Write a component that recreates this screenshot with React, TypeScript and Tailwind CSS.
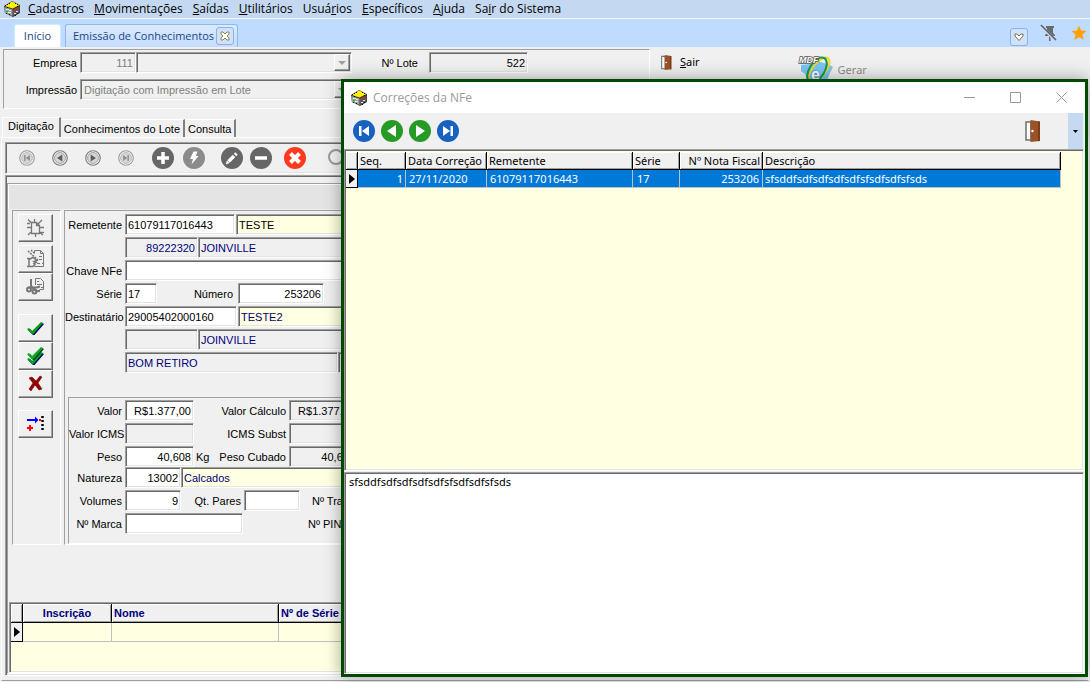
import React from 'react';

const sunken =
  'border border-t-[#a0a0a0] border-l-[#a0a0a0] border-r-white border-b-white shadow-[inset_1px_1px_0_#696969,inset_-1px_-1px_0_#e3e3e3]';
const raised =
  'border border-t-white border-l-white border-r-[#696969] border-b-[#696969] shadow-[inset_-1px_-1px_0_#a0a0a0]';
const group = 'border border-t-[#a0a0a0] border-l-[#a0a0a0] border-r-white border-b-white';
const segoe = 'font-["Open_Sans",sans-serif]';
const tahoma = 'font-["Noto_Sans",sans-serif]';

type FieldProps = {
  id: string;
  label?: string;
  name?: string;
  value?: string;
  className: string;
  labelClass?: string;
};

const Field: React.FC<FieldProps> = ({ id, label, name, value = '', className, labelClass = 'w-[57px]' }) => (
  <>
    {label && (
      <label htmlFor={id} className={`shrink-0 text-right whitespace-nowrap mr-[3px] ${labelClass}`}>
        {label}
      </label>
    )}
    <input
      id={id}
      aria-label={label ? undefined : name}
      defaultValue={value}
      className={`h-[21px] px-[2px] rounded-none outline-none ${sunken} ${className}`}
    />
  </>
);

const AppIcon: React.FC = () => (
  <svg viewBox="0 0 16 16" className="w-4 h-4 shrink-0">
    <path d="M0 5 8 0l8 4v8l-7 4-8-4z" fill="#3a3a3a" />
    <path d="M1 5 8 .5 15.500 4 8.500 7.500z" fill="#fff200" />
    <path d="M.5 6 8.500 8.500V15l-8-3.500z" fill="#a0a0a0" />
    <path d="M9 8.500 15.500 5.500v6L9 15z" fill="#585858" />
    <path d="M2 8.500h3M4 11.500h3M10 12.500h2M12 10.500h2M5 9.500h2" stroke="#e8e8e8" />
    <path d="M2 10.500h2" stroke="#00d030" strokeWidth="1.500" />
    <path d="M10 9.500 14 7" stroke="#e02020" strokeWidth="1.200" />
    <path d="M1 4.500h1M3 3.500h1M5 2.500h1M11 2.500h1M13 3.500h1M3 6.500h1M13 5.500h1M2 12.500h1M5 13.500h1M11 14.500h1M13 12.500h1" stroke="#111" />
  </svg>
);

const DoorIcon: React.FC<{ className: string }> = ({ className }) => (
  <svg viewBox="0 0 16 22" className={className} preserveAspectRatio="none">
    <path d="M1 2h5v18H1z" fill="#fff" stroke="#6e6e6e" strokeWidth="1.500" />
    <path d="M5.500 0 15 1.500v19.500L5.500 22z" fill="#9a5228" />
    <path d="M14 1.500v19.500" stroke="#7c3c18" strokeWidth="2" />
    <circle cx="7.500" cy="11" r="1.200" fill="#fff" />
  </svg>
);

const NavGlyph: React.FC<{ kind: string; fill: string }> = ({ kind, fill }) => (
  <g fill={fill}>
    {kind === 'first' && <path d="M6 6h2.500v10H6zM16 6v10l-7-5z" />}
    {kind === 'prev' && <path d="M15 5v12L6 11z" />}
    {kind === 'next' && <path d="M7 5v12l9-6z" />}
    {kind === 'last' && <path d="M13.500 6H16v10h-2.500zM6 6v10l7-5z" />}
  </g>
);

const navs = [
  { kind: 'first', label: 'Primeiro', color: '#1762c0' },
  { kind: 'prev', label: 'Anterior', color: '#259a24' },
  { kind: 'next', label: 'Próximo', color: '#259a24' },
  { kind: 'last', label: 'Último', color: '#1762c0' },
];

const menu = [
  ['', 'C', 'adastros'],
  ['', 'M', 'ovimentações'],
  ['', 'S', 'aídas'],
  ['', 'U', 'tilitários'],
  ['Usuá', 'r', 'ios'],
  ['', 'E', 'specíficos'],
  ['', 'A', 'juda'],
  ['Sa', 'i', 'r do Sistema'],
];

const actions = [
  {
    label: 'Adicionar',
    color: '#666666',
    space: 'ml-[18px]',
    glyph: <path d="M11 5v12M5 11h12" stroke="#fff" strokeWidth="3.500" />,
  },
  {
    label: 'Executar',
    color: '#8b8b8b',
    space: 'ml-[9px]',
    glyph: <path d="M10.500 4.500h4L12.800 9h2.700L8.500 17.500 10 12H7z" fill="#fff" />,
  },
  {
    label: 'Editar',
    color: '#666666',
    space: 'ml-4',
    glyph: (
      <g stroke="#fff">
        <path d="M7.500 14.500l5.500-5.500M14 8l1.500-1.500" strokeWidth="3.500" />
        <path d="M5 17l1-3 2 2z" fill="#fff" strokeWidth="0.500" />
      </g>
    ),
  },
  {
    label: 'Remover',
    color: '#666666',
    space: 'ml-[7px]',
    glyph: <path d="M5 11h12" stroke="#fff" strokeWidth="3.500" />,
  },
  {
    label: 'Cancelar',
    color: '#ff3a1f',
    space: 'ml-3',
    glyph: <path d="M6.500 6.500l9 9M15.500 6.500l-9 9" stroke="#fff" strokeWidth="4" />,
  },
];

const check = 'M1 7l2-1 3 3L15 0l2 1-9.500 11H6z';

const sideTools = [
  {
    label: 'Novo',
    space: '',
    glyph: (
      <g stroke="#777" fill="none">
        <path d="M5.500 4.500h5l3 3v8h-8zM10.500 4.500v3h3" strokeWidth="1.300" />
        <path d="M2 1.500l3 3M16 2l-4 4M1 9.500h4M14 9.500h4M2 17l3-3M17 17l-4-3M8.500 1v3M9.500 16v3M1 5.500h3M14 14.500h4" strokeWidth="1.300" />
      </g>
    ),
  },
  {
    label: 'Alterar',
    space: 'mt-[3px]',
    glyph: (
      <g stroke="#777" fill="none">
        <path d="M8.500 4.500v-3h6l3 3v13h-9" />
        <path d="M14.500 1.500v3h3M13 7.500h3M13 10.500h3M11 14.500h3M16 14.500h1" />
        <path d="M2 2l10 9M5 1l3 3" strokeWidth="1.500" strokeDasharray="2 1" />
        <path d="M1 9.500h2v8H1M3 10.500l4-2 4 3-3 1 2 1-2 1 1 1-2 2H3" strokeWidth="1.500" />
      </g>
    ),
  },
  {
    label: 'Recortar',
    space: '',
    glyph: (
      <g stroke="#777" fill="none">
        <path d="M9.500 8v-6.500h5l3 3v8h-4" />
        <path d="M11 4.500h2M11 7.500h5M15 10.500h2" />
        <path d="M5 2v7l5 5h4M2 10.500h9l3-1" strokeWidth="2" />
        <circle cx="3" cy="12.500" r="2" strokeWidth="2" />
        <circle cx="8.500" cy="14.500" r="2" strokeWidth="2" />
      </g>
    ),
  },
  {
    label: 'Confirmar',
    space: 'mt-[13px]',
    glyph: (
      <g>
        <path d={check} transform="translate(1 5)" fill="#000070" />
        <path d={check} transform="translate(0 4)" fill="#00a015" />
      </g>
    ),
  },
  {
    label: 'Confirmar todos',
    space: '',
    glyph: (
      <g>
        <path d={check} transform="translate(1 7)" fill="#000070" />
        <path d={check} transform="translate(0 6)" fill="#00a015" />
        <path d={check} transform="translate(1 2)" fill="#003a40" />
        <path d={check} transform="translate(0 1)" fill="#00b018" />
      </g>
    ),
  },
  {
    label: 'Excluir',
    space: '',
    glyph: <path d="M3 4l3-1 4 4 4-5 2 1-4 6 4 6-3 1-4-5-4 6-2-2 4-6z" fill="#980000" stroke="#500000" strokeWidth="0.500" />,
  },
  {
    label: 'Incluir item',
    space: 'mt-3',
    glyph: (
      <g>
        <path d="M1 5h8V2.500L12.500 6 9 9.500V7H1z" fill="#0000ff" />
        <path d="M1 14h6M4 11v6" stroke="#ff0000" strokeWidth="2" />
        <path d="M13 6h2" stroke="#ff0000" strokeWidth="2" />
        <path d="M16.500 2v16" stroke="#000" strokeWidth="2.500" strokeDasharray="2 2" />
      </g>
    ),
  },
];

const MdfeLogo: React.FC = () => (
  <svg viewBox="0 0 36 28" className="w-9 h-7">
    <path d="M3 10l9-1 5-4 5 2 8 2 5 3-3 6-3 7-6 2H10l-3-8-4-3z" fill="#79c4f3" />
    <ellipse cx="21" cy="15" rx="6.500" ry="15" transform="rotate(38 21 15)" fill="none" stroke="#f1d628" strokeWidth="2" />
    <ellipse cx="19" cy="15" rx="7.500" ry="14" transform="rotate(32 19 15)" fill="none" stroke="#14984a" strokeWidth="2" />
    <text x="13" y="25" fontFamily="Liberation Sans" fontSize="16" fontWeight="bold" fill="#fff" stroke="#368fc7" strokeWidth="1" paintOrder="stroke">
      e
    </text>
    <text x="1" y="8" fontFamily="Liberation Sans" fontSize="9" fontWeight="bold" fontStyle="italic" fill="#fff" stroke="#555" strokeWidth="1.500" paintOrder="stroke">
      MDF
    </text>
  </svg>
);

const th =
  'bg-[#f0f0f0] border-r border-b border-black shadow-[inset_1px_1px_0_#ffffff,inset_-1px_-1px_0_#a0a0a0] whitespace-nowrap overflow-hidden px-[2px]';

const RowMarker: React.FC = () => (
  <svg viewBox="0 0 6 10" className="w-[6px] h-[10px] ml-[3px]">
    <path d="M0 0l6 5-6 5z" fill="#000" />
  </svg>
);

const TopBars: React.FC = () => (
  <>
    <nav className={`flex items-center h-[18px] pl-1 bg-[#c4d9f1] text-xs leading-4 text-black ${segoe}`}>
      <AppIcon />
      <div className="flex gap-[10px] ml-2">
        {menu.map(([before, key, after]) => (
          <a key={key + after} href="#" className="whitespace-nowrap">
            {before}
            <span className="underline">{key}</span>
            {after}
          </a>
        ))}
      </div>
    </nav>
    <div className={`flex items-end h-[29px] border-t border-[#f4f8fd] bg-[#bfdbff] text-[11px] text-[#1c4587] ${segoe}`}>
      <button className="h-[23px] w-[47px] ml-[14px] rounded-t-[3px] border border-b-0 border-[#c9f0fa] bg-white">Início</button>
      <div className="flex items-center h-[23px] ml-1 pl-[7px] pr-[3px] rounded-t-[3px] border border-b-0 border-[#8db8ea] bg-gradient-to-b from-[#dcebfd] to-[#c3dcff]">
        <button className="whitespace-nowrap">Emissão de Conhecimentos</button>
        <button aria-label="Fechar" className="flex items-center justify-center size-[18px] ml-[2px] rounded-[3px] border border-[#8fb1de] bg-[#cfe2fb]">
          <svg viewBox="0 0 10 10" className="size-[10px]">
            <path d="M1 1h2l2 2 2-2h2v2L7 5l2 2v2H7L5 7 3 9H1V7l2-2-2-2z" fill="#fff" stroke="#8a8250" />
          </svg>
        </button>
      </div>
      <div className="flex items-end ml-auto pb-[1px]">
        <button aria-label="Lista de abas" className="flex items-center justify-center size-[18px] rounded-[3px] border border-[#8fb1de] bg-[#cfe2fb]">
          <svg viewBox="0 0 10 10" className="size-[10px]">
            <path d="M1 2h2l2 2 2-2h2v2L5 8.500 1 4z" fill="#fff" stroke="#77733f" />
          </svg>
        </button>
        <button aria-label="Desafixar" className="ml-3 mb-1">
          <svg viewBox="0 0 18 18" className="size-[18px]">
            <path d="M6 2h8v2h-1v5l2 2v1h-4.500v5h-1.500v-5H5v-1l2-2V4H6z" fill="#6b6b6b" />
            <path d="M1 2l15 15" stroke="#c5daf7" strokeWidth="3" />
            <path d="M1 1l15 15" stroke="#5c5c5c" strokeWidth="1.500" />
          </svg>
        </button>
        <button aria-label="Favorito" className="ml-[13px] mb-[5px] mr-[3px]">
          <svg viewBox="0 0 16 16" className="size-4">
            <path d="M8 .8l2.200 4.700 5.200.6-3.900 3.500 1.100 5.200L8 12.200l-4.600 2.600 1.100-5.200L.6 6.100l5.200-.6z" fill="#ffa200" />
          </svg>
        </button>
      </div>
    </div>
  </>
);

const LoteHeader: React.FC = () => (
  <div className="flex pt-[2px] pl-[3px] h-[62px]">
    <div className={`w-[647px] pt-[2px] ${group}`}>
      <div className="flex items-center h-[21px]">
        <Field id="empresa" label="Empresa" value="111" labelClass="w-[73px]" className="w-14 text-right text-[#808080]" />
        <div className={`relative w-[216px] h-[21px] ${sunken}`}>
          <select aria-label="Nome da empresa" className="w-full h-full appearance-none rounded-none outline-none px-1 text-[#808080]" />
          <span className={`absolute right-[1px] top-[1px] flex items-center justify-center w-4 h-[17px] bg-[#f0f0f0] pointer-events-none ${raised}`}>
            <svg viewBox="0 0 8 4" className="w-2 h-1"><path d="M0 0h8L4 4z" fill="#a0a0a0" /></svg>
          </span>
        </div>
        <Field id="lote" label="Nº Lote" value="522" labelClass="w-[66px]" className="w-[99px] ml-2 text-right" />
      </div>
      <div className="flex items-center h-[21px] mt-[6px]">
        <label htmlFor="impressao" className="w-[73px] mr-[3px] text-right">Impressão</label>
        <div className={`relative w-[272px] h-[21px] ${sunken}`}>
          <select id="impressao" className="w-full h-full appearance-none rounded-none outline-none px-[3px] text-[#808080]">
            <option>Digitação com Impressão em Lote</option>
          </select>
          <span className={`absolute right-[1px] top-[1px] flex items-center justify-center w-4 h-[17px] bg-[#f0f0f0] pointer-events-none ${raised}`}>
            <svg viewBox="0 0 8 4" className="w-2 h-1"><path d="M0 0h8L4 4z" fill="#a0a0a0" /></svg>
          </span>
        </div>
      </div>
    </div>
    <button className={`flex items-center self-start h-[26px] ml-[11px] text-black ${tahoma}`}>
      <DoorIcon className="w-[11px] h-[15px]" />
      <span className="ml-2"><span className="underline">S</span>air</span>
    </button>
    <button className={`flex items-start self-start ml-[98px] mt-[6px] text-[#8c8c8c] ${tahoma}`}>
      <MdfeLogo />
      <span className="ml-1 mt-[7px] leading-4">Gerar</span>
    </button>
  </div>
);

const RecordToolbar: React.FC = () => (
  <div className={`flex items-center h-8 shrink-0 pl-[13px] overflow-hidden ${sunken}`}>
    <div className="flex gap-[17px]">
      {navs.map((nav) => {
        const middle = nav.kind === 'prev' || nav.kind === 'next';
        return (
          <button key={nav.kind} aria-label={nav.label}>
            <svg viewBox="0 0 22 22" className="size-4">
              <circle cx="11" cy="11" r="10" fill="#fafafa" stroke={middle ? '#777' : '#999'} strokeWidth="1.500" />
              <circle cx="11" cy="11" r="7.500" fill="#d6d6d6" stroke={middle ? '#888' : '#aaa'} />
              <g transform="translate(2.200 2.200) scale(.8)">
                <NavGlyph kind={nav.kind} fill={middle ? '#5c5c5c' : '#8f8f8f'} />
              </g>
            </svg>
          </button>
        );
      })}
    </div>
    {actions.map((action) => (
      <button key={action.label} aria-label={action.label} className={action.space}>
        <svg viewBox="0 0 22 22" className="size-[22px]">
          <circle cx="11" cy="11" r="11" fill={action.color} />
          {action.glyph}
        </svg>
      </button>
    ))}
    <button aria-label="Pesquisar" className="ml-[21px]">
      <svg viewBox="0 0 22 22" className="size-[22px]">
        <circle cx="9" cy="10" r="7" fill="#f4f4f4" stroke="#9a9a9a" strokeWidth="2" />
        <path d="M14 15l6 6" stroke="#9a9a9a" strokeWidth="3" />
      </svg>
    </button>
  </div>
);

const NotaForm: React.FC = () => (
  <div className="flex px-1 pt-[1px]">
    <div className={`flex flex-col w-[49px] pl-[5px] pt-[3px] shrink-0 ${group}`}>
      {sideTools.map((tool) => (
        <button key={tool.label} aria-label={tool.label} className={`flex items-center justify-center w-[35px] h-7 bg-[#f0f0f0] ${raised} ${tool.space}`}>
          <svg viewBox="0 0 19 20" className="w-[19px] h-5">{tool.glyph}</svg>
        </button>
      ))}
    </div>
    <div className={`flex-1 min-w-0 ml-[3px] pt-[3px] overflow-hidden ${group}`}>
      <div className="flex flex-col gap-[2px]">
        <div className="flex items-center">
          <Field id="remetente" label="Remetente" value="61079117016443" className="w-[110px] bg-white" />
          <Field id="remNome" name="Nome do remetente" value="TESTE" className="w-[400px] ml-[1px] bg-[#ffffe1]" />
        </div>
        <div className="flex items-center pl-[60px]">
          <Field id="remCep" name="CEP do remetente" value="89222320" className="w-[73px] text-right text-[#00007b]" />
          <Field id="remCidade" name="Cidade do remetente" value="JOINVILLE" className="w-[300px] text-[#00007b]" />
        </div>
        <div className="flex items-center">
          <Field id="chave" label="Chave NFe" className="w-[400px] bg-white" />
        </div>
        <div className="flex items-center">
          <Field id="serie" label="Série" value="17" className="w-8 bg-white" />
          <Field id="numero" label="Número" value="253206" labelClass="w-[76px]" className="w-[86px] ml-[2px] bg-white text-right" />
        </div>
        <div className="flex items-center">
          <Field id="dest" label="Destinatário" value="29005402000160" className="w-[112px] bg-white" />
          <Field id="destNome" name="Nome do destinatário" value="TESTE2" className="w-[400px] ml-[1px] bg-[#ffffe1] text-[#00007b]" />
        </div>
        <div className="flex items-center pl-[60px]">
          <Field id="destCep" name="CEP do destinatário" className="w-[73px]" />
          <Field id="destCidade" name="Cidade do destinatário" value="JOINVILLE" className="w-[300px] text-[#00007b]" />
        </div>
        <div className="flex items-center pl-[60px]">
          <Field id="bairro" name="Bairro" value="BOM RETIRO" className="w-[213px] text-[#00007b]" />
          <Field id="compl" name="Complemento" className="w-[200px]" />
        </div>
      </div>
      <div className={`flex flex-col gap-[2px] h-[147px] mt-6 ml-[3px] pt-[2px] ${group}`}>
        <div className="flex items-center">
          <Field id="valor" label="Valor" value="R$1.377,00" labelClass="w-[53px]" className="w-[69px] bg-white text-right" />
          <Field id="calculo" label="Valor Cálculo" value="R$1.377,00" labelClass="w-[92px]" className="w-[69px] text-right" />
        </div>
        <div className="flex items-center">
          <Field id="icms" label="Valor ICMS" labelClass="w-[53px]" className="w-[69px]" />
          <Field id="subst" label="ICMS Subst" labelClass="w-[92px]" className="w-[69px]" />
        </div>
        <div>
          <div className="flex items-center">
            <Field id="peso" label="Peso" value="40,608" labelClass="w-[53px]" className="w-[69px] bg-white text-right" />
            <span className="w-4 ml-[2px]">Kg</span>
            <Field id="cubado" label="Peso Cubado" value="40,608" labelClass="w-[74px]" className="w-[69px] text-right" />
          </div>
          <div className="flex items-center">
            <Field id="natureza" label="Natureza" value="13002" labelClass="w-[53px]" className="w-[56px] bg-white text-right" />
            <Field id="natNome" name="Descrição da natureza" value="Calcados" className="w-[300px] bg-[#ffffe1] text-[#00007b]" />
          </div>
        </div>
        <div className="flex items-center">
          <Field id="volumes" label="Volumes" value="9" labelClass="w-[53px]" className="w-[56px] bg-white text-right" />
          <Field id="pares" label="Qt. Pares" labelClass="w-[60px]" className="w-[56px] bg-white" />
          <Field id="transporte" label="Nº Transporte" labelClass="ml-3" className="w-[80px] bg-white" />
        </div>
        <div className="flex items-center">
          <Field id="marca" label="Nº Marca" labelClass="w-[53px]" className="w-[118px] bg-white" />
          <Field id="pin" label="Nº PIN" labelClass="ml-[65px]" className="w-[80px] bg-white" />
        </div>
      </div>
    </div>
  </div>
);

const InscricaoTable: React.FC = () => (
  <div className={`flex-1 mt-[57px] ml-[1px] p-[1px] overflow-hidden bg-[#ffffe1] ${sunken}`}>
    <table className="w-[850px] table-fixed border-separate border-spacing-0">
      <thead>
        <tr className="h-[19px] text-[#00007b] font-bold">
          <th className={`w-3 ${th}`} />
          <th className={`w-[89px] text-center ${th}`}>Inscrição</th>
          <th className={`w-[167px] text-left ${th}`}>Nome</th>
          <th className={`text-left ${th}`}>Nº de Série</th>
        </tr>
      </thead>
      <tbody>
        <tr className="h-[19px]">
          <td className="p-0 bg-[#f0f0f0] border-r border-b border-black"><RowMarker /></td>
          <td className="border-r border-b border-[#c0c0c0]" />
          <td className="border-r border-b border-[#c0c0c0]" />
          <td className="border-r border-b border-[#c0c0c0]" />
        </tr>
      </tbody>
    </table>
  </div>
);

const CorrecoesWindow: React.FC = () => (
  <section
    className={`absolute left-[341px] right-[2px] top-[79px] bottom-[5px] flex flex-col border-[3px] border-[#004a00] bg-[#f0f0f0] shadow-[0_0_16px_rgba(0,0,0,0.35)] text-[11px] leading-[14px] ${tahoma}`}
  >
    <header className={`flex items-center h-[31px] shrink-0 pl-[7px] bg-white text-xs text-[#999999] ${segoe}`}>
      <AppIcon />
      <h1 className="ml-[6px]">Correções da NFe</h1>
      <div className="flex ml-auto gap-[35px] mr-[18px]">
        <button aria-label="Minimizar">
          <svg viewBox="0 0 11 11" className="size-[11px]"><path d="M0 5.500h11" stroke="#999" /></svg>
        </button>
        <button aria-label="Maximizar">
          <svg viewBox="0 0 11 11" className="size-[11px]"><path d="M.5.5h10v10H.5z" fill="none" stroke="#999" /></svg>
        </button>
        <button aria-label="Fechar janela">
          <svg viewBox="0 0 11 11" className="size-[11px]"><path d="M.5.5l10 10M10.500.5l-10 10" stroke="#999" /></svg>
        </button>
      </div>
    </header>
    <div className="flex items-center h-9 shrink-0 pl-[9px]">
      <div className="flex gap-[6px]">
        {navs.map((nav) => (
          <button key={nav.kind} aria-label={nav.label}>
            <svg viewBox="0 0 22 22" className="size-[22px]">
              <circle cx="11" cy="11" r="11" fill={nav.color} />
              <NavGlyph kind={nav.kind} fill="#fff" />
            </svg>
          </button>
        ))}
      </div>
      <button aria-label="Sair" className="ml-auto">
        <DoorIcon className="w-4 h-[22px]" />
      </button>
      <button aria-label="Opções" className="flex items-center justify-center w-[15px] h-9 ml-[27px] mr-[2px] bg-[#c5d9f1]">
        <svg viewBox="0 0 5 3" className="w-[5px] h-[3px]"><path d="M0 0h5L2.500 3z" fill="#000" /></svg>
      </button>
    </div>
    <div className={`flex-[324] min-h-0 overflow-hidden pt-[2px] px-[1px] mr-[1px] bg-[#ffffe1] ${sunken}`}>
      <table className="w-[715px] table-fixed border-separate border-spacing-0">
        <thead>
          <tr className="h-[18px] text-black">
            <th className={`w-3 ${th}`} />
            <th className={`w-12 text-left font-normal ${th}`}>Seq.</th>
            <th className={`w-[81px] text-left font-normal ${th}`}>Data Correção</th>
            <th className={`w-[146px] text-left font-normal ${th}`}>Remetente</th>
            <th className={`w-[47px] text-left font-normal ${th}`}>Série</th>
            <th className={`w-[83px] text-right font-normal ${th}`}>Nº Nota Fiscal</th>
            <th className={`text-left font-normal ${th}`}>Descrição</th>
          </tr>
        </thead>
        <tbody>
          <tr className="h-[18px] bg-[#0078d7] text-white">
            <td className="p-0 bg-[#f0f0f0] border-r border-b border-black"><RowMarker /></td>
            <td className="py-0 px-[2px] text-right border-r border-b border-[#c0c0c0]">1</td>
            <td className="py-0 px-[3px] border-r border-b border-[#c0c0c0]">27/11/2020</td>
            <td className="py-0 px-[3px] border-r border-b border-[#c0c0c0]">61079117016443</td>
            <td className="py-0 px-1 border-r border-b border-[#c0c0c0]">17</td>
            <td className="py-0 px-[3px] text-right border-r border-b border-[#c0c0c0]">253206</td>
            <td className="py-0 px-[2px] border-r border-b border-[#c0c0c0]">sfsddfsdfsdfsdfsdfsfsdfsdfsfsds</td>
          </tr>
        </tbody>
      </table>
    </div>
    <textarea
      aria-label="Descrição da correção"
      defaultValue="sfsddfsdfsdfsdfsdfsfsdfsdfsfsds"
      className={`flex-[199] min-h-0 mt-[1px] mr-[1px] px-1 py-[2px] resize-none outline-none rounded-none bg-white text-black ${sunken}`}
    />
  </section>
);

const App: React.FC = () => (
  <div className='relative flex flex-col h-screen overflow-hidden bg-[#f0f0f0] text-[11px] leading-[14px] text-black font-["Liberation_Sans",Arial,sans-serif]'>
    <TopBars />
    <LoteHeader />
    <div className="flex items-end h-7 pl-[2px]">
      <button className="h-5 px-[5px] pb-1 border-t border-l border-white border-r-2 border-r-[#808080]">Digitação</button>
      <button className="h-[18px] px-[3px] border-t border-white border-r-2 border-r-[#808080]">Conhecimentos do Lote</button>
      <button className="h-[18px] px-[3px] border-t border-white border-r-2 border-r-[#808080]">Consulta</button>
    </div>
    <main className="flex-1 flex flex-col min-h-0 mx-[1px] mb-[1px] pt-1 pl-[3px] pb-1 border border-white border-b-[#a0a0a0]">
      <RecordToolbar />
      <div className={`flex-1 flex flex-col min-h-0 mt-[1px] pt-[7px] pl-[1px] pr-[1px] pb-[1px] ${sunken}`}>
        <div className="flex-1 flex flex-col min-h-0 border border-[#a0a0a0] border-b-white">
          <div className="h-[25px] shrink-0 border-t border-l border-white bg-[#e4e4e4]" />
          <NotaForm />
          <InscricaoTable />
        </div>
      </div>
    </main>
    <CorrecoesWindow />
  </div>
);

export default App;
